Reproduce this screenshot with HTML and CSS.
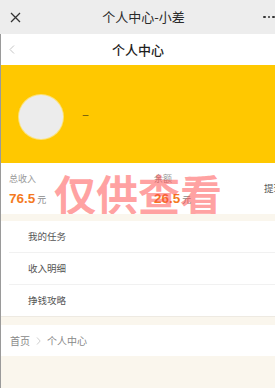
FILE: index.html
```html
<!DOCTYPE html>
<html lang="zh">
<head>
<meta charset="utf-8">
<title>个人中心-小差</title>
<link rel="stylesheet" href="styles.css">
</head>
<body>
<div class="topbar">
  <svg class="close" width="11" height="11" viewBox="0 0 11 11"><path d="M1 1 L10 10 M10 1 L1 10" stroke="#333" stroke-width="1.3" fill="none"/></svg>
  <div class="toptitle">个人中心-小差</div>
  <div class="dots"><i></i><i></i><i></i></div>
</div>
<div class="page">
  <div class="navbar">
    <svg class="back" width="6" height="9" viewBox="0 0 6 9"><path d="M5 0.5 L1 4.5 L5 8.5" stroke="#c4c4c4" stroke-width="1" fill="none"/></svg>
    <div class="navtitle">个人中心</div>
    <span></span>
  </div>
  <div class="hero">
    <div class="avatar"></div>
    <div class="nick">–</div>
  </div>
  <div class="income">
    <div class="col col1">
      <div class="label">总收入</div>
      <div class="value"><b>76.5</b><span>元</span></div>
    </div>
    <div class="col col2">
      <div class="label">余额</div>
      <div class="value"><b>26.5</b><span>元</span></div>
    </div>
    <div class="withdraw">提现</div>
    <div class="watermark">仅供查看</div>
  </div>
  <div class="gap"></div>
  <div class="list">
    <div class="item">我的任务</div>
    <div class="item">收入明细</div>
    <div class="item">挣钱攻略</div>
  </div>
  <div class="gap gap2"></div>
  <div class="crumb">
    <span>首页</span>
    <svg class="sep" width="5" height="8" viewBox="0 0 5 8"><path d="M1 0.5 L4.2 4 L1 7.5" stroke="#c8c8c8" stroke-width="0.9" fill="none"/></svg>
    <span>个人中心</span>
  </div>
  <div class="rest"></div>
</div>
</body>
</html>
```
FILE: styles.css
```css
html, body {
  margin: 0;
  padding: 0;
}
body {
  width: 275px;
  height: 388px;
  overflow: hidden;
  background: #faf6ed;
  font-family: "Noto Sans CJK SC", "Noto Sans", "Liberation Sans", sans-serif;
}
.topbar {
  height: 34px;
  background: #ededed;
  display: flex;
  align-items: center;
  position: relative;
}
.close {
  margin-left: 10px;
  width: 11px;
  flex: 0 0 auto;
}
.toptitle {
  flex: 1;
  text-align: center;
  font-size: 13px;
  color: #2a2a2a;
  line-height: 18px;
  padding-left: 3px;
}
.dots {
  display: flex;
  gap: 2px;
  width: 13px;
  margin-right: -1px;
  flex: 0 0 auto;
}
.dots i {
  width: 2.5px;
  height: 2.5px;
  background: #333;
  border-radius: 50%;
  flex: 0 0 auto;
}
.page {
  border-left: 1px solid #9a9a9a;
}
.navbar {
  height: 31px;
  background: #fff;
  display: grid;
  grid-template-columns: 30px 1fr 30px;
  align-items: center;
}
.back {
  margin-left: 8px;
}
.navtitle {
  text-align: center;
  font-size: 13px;
  font-weight: 500;
  color: #1e1e1e;
  line-height: 18px;
}
.hero {
  height: 98px;
  background: #ffc800;
  display: flex;
  align-items: flex-start;
  padding-top: 30px;
  box-sizing: border-box;
}
.avatar {
  width: 44px;
  height: 44px;
  border-radius: 50%;
  background: #ececec;
  box-shadow: 0 0 0 1px #fbe27a;
  margin-left: 18px;
}
.nick {
  margin-left: 19px;
  margin-top: 10px;
  font-size: 13px;
  line-height: 18px;
  color: #6b5a10;
}
.income {
  height: 51px;
  background: #fff;
  display: flex;
  position: relative;
  overflow: hidden;
  padding-top: 10px;
  box-sizing: border-box;
}
.col {
  flex: 0 0 auto;
}
.col1 {
  width: 153px;
  padding-left: 8px;
  box-sizing: border-box;
}
.col2 {
  width: 110px;
}
.label {
  font-size: 9px;
  line-height: 12px;
  color: #9a9a9a;
}
.value {
  margin-top: 2px;
  line-height: 18px;
  white-space: nowrap;
}
.value b {
  font-family: "Liberation Sans", Arial, sans-serif;
  font-weight: 700;
  font-size: 13.5px;
  color: #f47a1f;
}
.value span {
  font-size: 9px;
  color: #8a8a8a;
  margin-left: 2px;
}
.withdraw {
  flex: 0 0 auto;
  font-size: 9.5px;
  color: #555;
  line-height: 12px;
  margin-top: 9px;
  white-space: nowrap;
}
.watermark {
  position: absolute;
  left: 53px;
  top: 6px;
  font-size: 42px;
  font-weight: 700;
  line-height: 48px;
  color: rgba(255, 70, 70, 0.5);
  white-space: nowrap;
}
.gap {
  height: 7px;
}
.gap2 {
  height: 9px;
  border-top: 1px solid #eeeae2;
  box-sizing: border-box;
}
.list {
  background: #fff;
  padding-left: 8px;
}
.item {
  height: 31px;
  line-height: 31px;
  padding-left: 19px;
  font-size: 9.5px;
  color: #555;
}
.item + .item {
  border-top: 1px solid #f1f1f1;
}
.crumb {
  height: 31px;
  background: #fff;
  display: flex;
  align-items: center;
  gap: 6px;
  padding-left: 9px;
  font-size: 10px;
  color: #888;
}
.rest {
  height: 40px;
}
```
